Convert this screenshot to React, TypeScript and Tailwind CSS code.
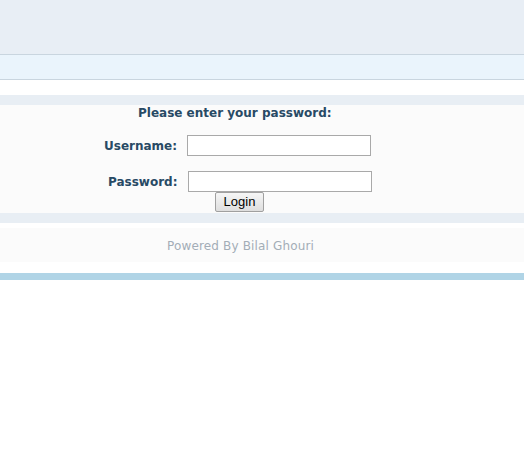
export default function App() {
  return (
    <div className="w-[524px] h-[450px] bg-white font-['DejaVu_Sans',Verdana,sans-serif]">
      {/* Header */}
      <div className="h-[55px] bg-[#e8eef5] border-b border-[#c9d5df]" />
      <div className="h-[25px] bg-[#eaf4fc] border-b border-[#c9d5df]" />
      <div className="h-[15px]" />

      {/* Login box */}
      <div className="h-[10px] bg-[#e8eef4]" />
      <div className="h-[108px] bg-[#fbfbfb]">
        <div className="pl-[138px] text-[12px] font-bold text-[#284a65] leading-[16px]">
          Please enter your password:
        </div>
        <div className="flex items-center mt-[14px] h-[21px]">
          <span className="ml-[104px] w-[83px] text-[12px] font-bold text-[#284a65]">Username:</span>
          <input className="w-[184px] h-[21px] border border-[#a9a9a9] bg-white" />
        </div>
        <div className="flex items-center mt-[15px] h-[21px]">
          <span className="ml-[108px] w-[80px] text-[12px] font-bold text-[#284a65]">Password:</span>
          <input type="password" className="w-[184px] h-[21px] border border-[#a9a9a9] bg-white" />
        </div>
        <div className="flex pl-[215px]">
          <button className="w-[49px] h-[20px] border border-[#a0a0a0] rounded-[2px] bg-gradient-to-b from-[#f6f6f6] to-[#dedede] text-[13px] leading-[18px] text-black font-['Liberation_Sans',Arial,sans-serif]">
            Login
          </button>
        </div>
      </div>
      <div className="h-[10px] bg-[#e8eef4]" />
      <div className="h-[5px]" />

      {/* Footer */}
      <div className="h-[34px] bg-[#fbfbfb] flex items-center pt-[2px]">
        <span className="ml-[167px] text-[12px] tracking-[0.15px] text-[#a3adb7]">Powered By Bilal Ghouri</span>
      </div>
      <div className="h-[11px]" />
      <div className="h-[7px] bg-[#b0d4e6]" />
    </div>
  );
}
